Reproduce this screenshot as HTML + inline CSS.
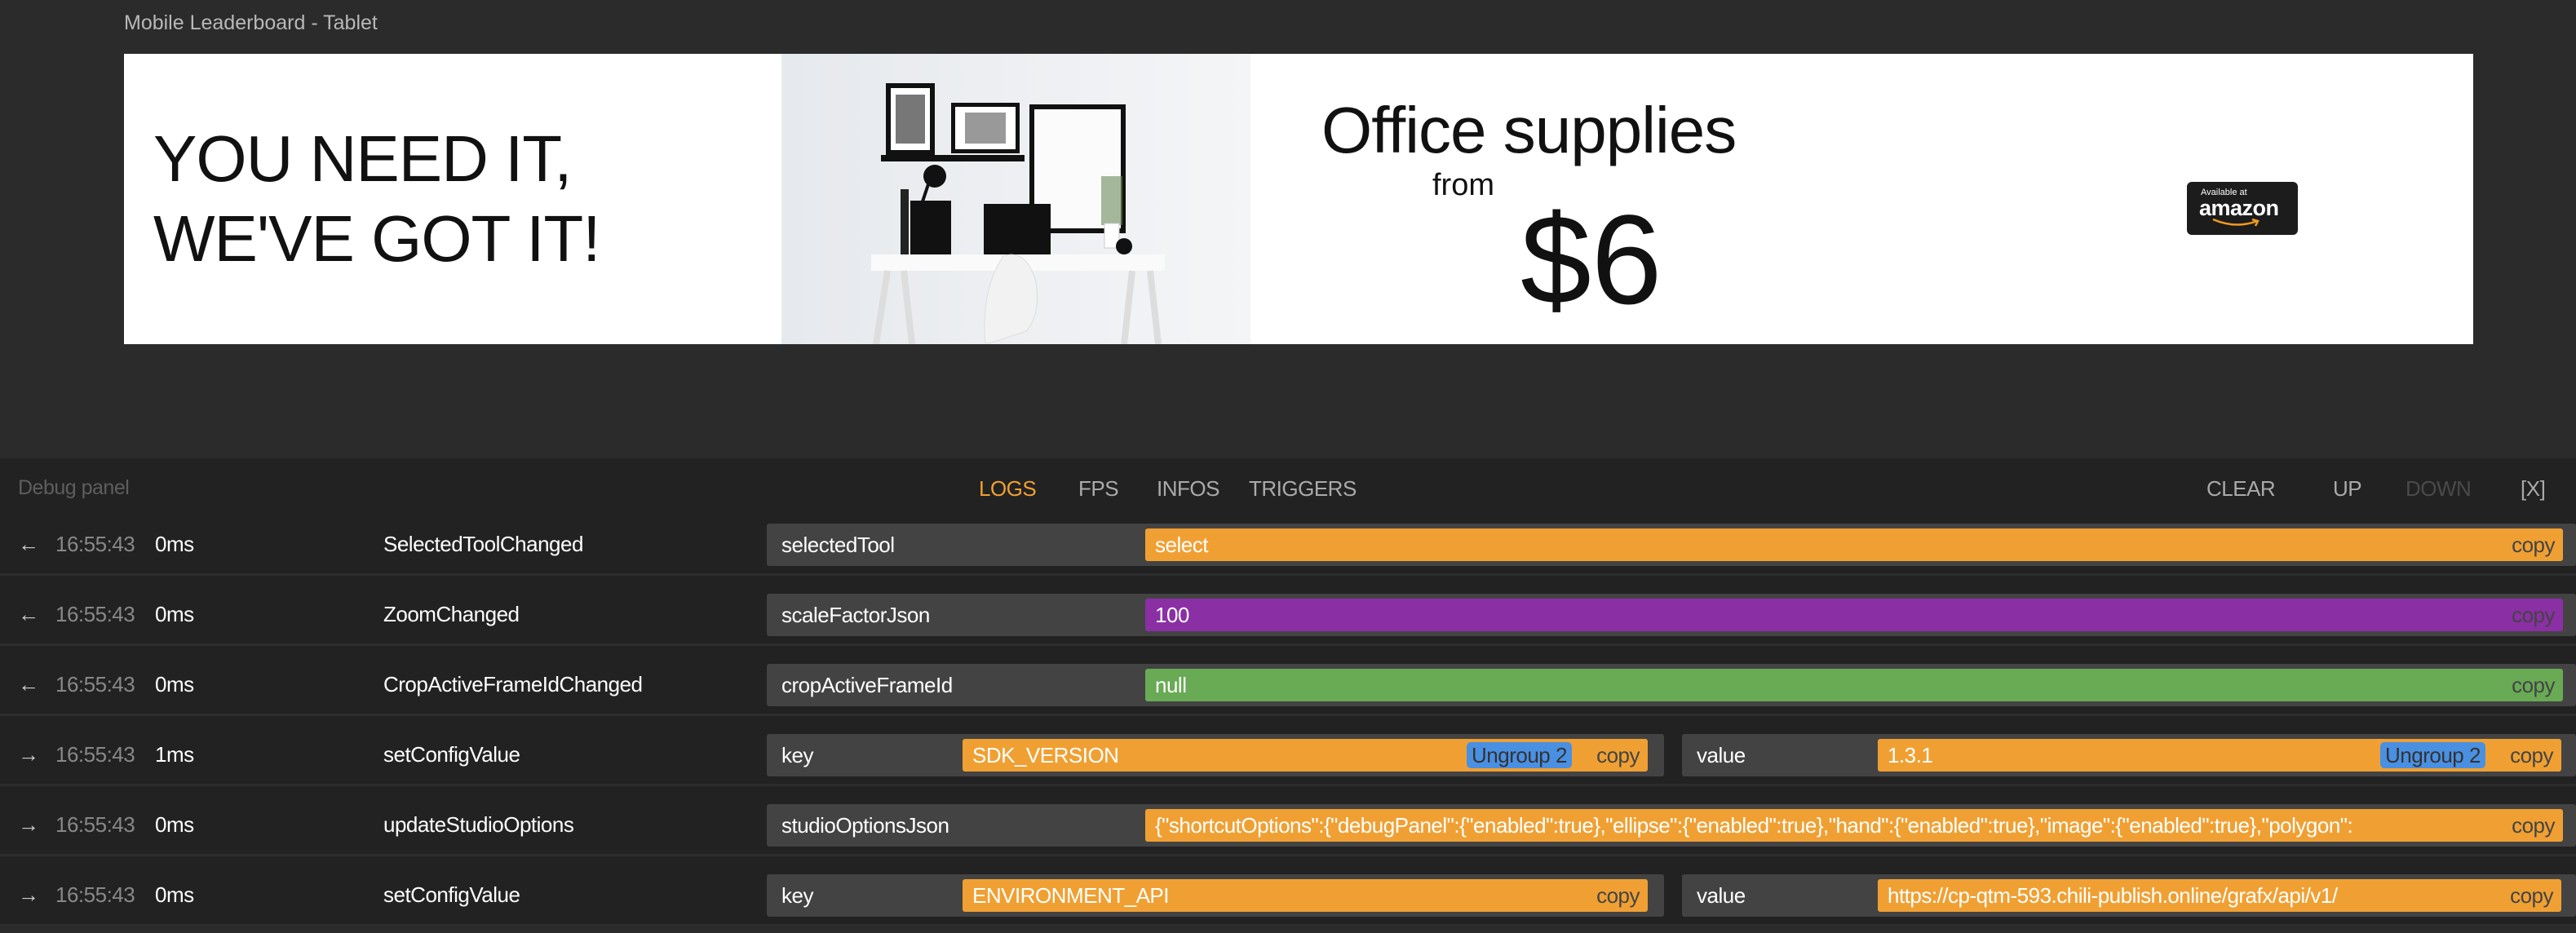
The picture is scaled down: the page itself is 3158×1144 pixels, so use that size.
<!DOCTYPE html>
<html><head><meta charset="utf-8"><style>
*{margin:0;padding:0;box-sizing:border-box}
body{width:3158px;height:1136px;background:#2b2b2b;font-family:"Liberation Sans",sans-serif;position:relative;overflow:hidden}
.a{position:absolute;white-space:nowrap}
.title{left:152px;top:14px;font-size:25px;color:#b8b8b8}
.banner{left:152px;top:66px;width:2880px;height:356px;background:#fff}
.dp{left:0;top:562px;width:3158px;height:574px;background:#222}
.hd{font-size:26px;top:584px;color:#aaa;letter-spacing:-0.5px}
.row{position:absolute;left:0;width:3158px;height:86px;border-bottom:3px solid #2d2d2d}
.t{position:absolute;font-size:26px;letter-spacing:-0.5px;top:0;line-height:94px;white-space:nowrap}
.box{position:absolute;top:22px;height:52px;background:#434343;border-radius:3px}
.box .t{line-height:52px!important}
.bar{position:absolute;top:6px;height:40px;border-radius:3px;color:#fff;font-size:26px;line-height:40px;padding-left:12px;letter-spacing:-0.5px;white-space:nowrap;overflow:hidden}
.cp{position:absolute;right:10px;top:0;color:#444}
.ug{position:absolute;top:4px;height:32px;line-height:32px;background:#4a90e2;color:#333;border-radius:5px;padding:0 6px;font-size:26px}
</style></head><body>
<div class="a title">Mobile Leaderboard - Tablet</div>
<div class="a banner">
 <div class="a" style="left:36px;top:80px;font-size:80px;line-height:98px;color:#111;letter-spacing:-1px">YOU NEED IT,<br>WE'VE GOT IT!</div>
 <svg class="a" style="left:806px;top:0" width="575" height="356" viewBox="0 0 575 356">
  <defs><linearGradient id="g" x1="0" x2="1"><stop offset="0" stop-color="#e6e9ed"/><stop offset="1" stop-color="#f4f5f7"/></linearGradient></defs>
  <rect width="575" height="356" fill="url(#g)"/>
  <rect x="128" y="36" width="60" height="88" fill="#111"/><rect x="134" y="42" width="48" height="76" fill="#fff"/><rect x="140" y="50" width="36" height="60" fill="#777"/>
  <rect x="208" y="60" width="84" height="62" fill="#111"/><rect x="213" y="65" width="74" height="52" fill="#fff"/><rect x="225" y="72" width="50" height="38" fill="#999"/>
  <rect x="304" y="62" width="118" height="158" fill="#111"/><rect x="310" y="68" width="106" height="146" fill="#fbfbfb"/>
  <rect x="122" y="124" width="176" height="8" fill="#111"/>
  <rect x="146" y="166" width="10" height="80" fill="#222"/>
  <rect x="158" y="180" width="50" height="68" fill="#111"/>
  <rect x="248" y="184" width="82" height="62" fill="#111"/>
  <rect x="110" y="246" width="360" height="20" fill="#fafafa"/>
  <path d="M130 266 L116 356 M150 266 L160 356 M430 266 L420 356 M452 266 L462 356" stroke="#ddd" stroke-width="8"/>
  <path d="M250 356 Q244 290 272 248 Q300 238 312 280 Q318 320 300 340 L270 350 Z" fill="#f2f2f2" stroke="#ddd"/>
  <path d="M180 160 L168 196 L176 240" stroke="#111" stroke-width="4" fill="none"/><circle cx="188" cy="150" r="14" fill="#111"/>
  <rect x="392" y="150" width="26" height="60" fill="#6a8a5a" opacity=".6"/><rect x="396" y="208" width="18" height="30" fill="#fff" stroke="#ccc"/>
  <circle cx="420" cy="236" r="10" fill="#111"/>
 </svg>
 <div class="a" style="left:1468px;top:48px;font-size:80px;color:#111;letter-spacing:-1px">Office supplies</div>
 <div class="a" style="left:1604px;top:140px;font-size:38px;color:#111">from</div>
 <div class="a" style="left:1712px;top:164px;font-size:156px;color:#111">$6</div>
 <div class="a" style="left:2529px;top:157px;width:136px;height:65px;background:#1c1c1c;border-radius:6px;color:#fff">
  <div class="a" style="left:17px;top:7px;font-size:11px">Available at</div>
  <div class="a" style="left:15px;top:17px;font-size:27px;font-weight:bold;letter-spacing:-0.5px">amazon</div>
  <svg class="a" style="left:30px;top:44px" width="60" height="12"><path d="M2 2 Q30 14 56 4 M50 2 L57 4 L54 10" stroke="#f29a1f" stroke-width="2.5" fill="none"/></svg>
 </div>
</div>
<div class="a dp"></div>
<div class="a hd" style="left:22px;color:#5e5e5e;font-size:25px">Debug panel</div>
<div class="a hd" style="left:1200px;color:#f0a030">LOGS</div>
<div class="a hd" style="left:1322px">FPS</div>
<div class="a hd" style="left:1418px">INFOS</div>
<div class="a hd" style="left:1531px">TRIGGERS</div>
<div class="a hd" style="left:2705px">CLEAR</div>
<div class="a hd" style="left:2860px">UP</div>
<div class="a hd" style="left:2949px;color:#4a4a4a">DOWN</div>
<div class="a hd" style="left:3090px">[X]</div>

<div class="row" style="top:620px">
 <div class="t" style="left:22px;color:#ccc">←</div><div class="t" style="left:68px;color:#888">16:55:43</div><div class="t" style="left:190px;color:#fff">0ms</div>
 <div class="t" style="left:470px;color:#fff">SelectedToolChanged</div>
 <div class="box" style="left:940px;width:2218px"><div class="t" style="left:18px;color:#fff">selectedTool</div>
  <div class="bar" style="left:464px;width:1738px;background:#f0a033">select<span class="cp">copy</span></div></div>
</div>
<div class="row" style="top:706px">
 <div class="t" style="left:22px;color:#ccc">←</div><div class="t" style="left:68px;color:#888">16:55:43</div><div class="t" style="left:190px;color:#fff">0ms</div>
 <div class="t" style="left:470px;color:#fff">ZoomChanged</div>
 <div class="box" style="left:940px;width:2218px"><div class="t" style="left:18px;color:#fff">scaleFactorJson</div>
  <div class="bar" style="left:464px;width:1738px;background:#8b2fa5">100<span class="cp">copy</span></div></div>
</div>
<div class="row" style="top:792px">
 <div class="t" style="left:22px;color:#ccc">←</div><div class="t" style="left:68px;color:#888">16:55:43</div><div class="t" style="left:190px;color:#fff">0ms</div>
 <div class="t" style="left:470px;color:#fff">CropActiveFrameIdChanged</div>
 <div class="box" style="left:940px;width:2218px"><div class="t" style="left:18px;color:#fff">cropActiveFrameId</div>
  <div class="bar" style="left:464px;width:1738px;background:#69aa55">null<span class="cp">copy</span></div></div>
</div>
<div class="row" style="top:878px">
 <div class="t" style="left:22px;color:#ccc">→</div><div class="t" style="left:68px;color:#888">16:55:43</div><div class="t" style="left:190px;color:#fff">1ms</div>
 <div class="t" style="left:470px;color:#fff">setConfigValue</div>
 <div class="box" style="left:940px;width:1100px"><div class="t" style="left:18px;color:#fff">key</div>
  <div class="bar" style="left:240px;width:840px;background:#f0a033">SDK_VERSION<span class="ug" style="left:618px">Ungroup 2</span><span class="cp">copy</span></div></div>
 <div class="box" style="left:2062px;width:1096px"><div class="t" style="left:18px;color:#fff">value</div>
  <div class="bar" style="left:240px;width:838px;background:#f0a033">1.3.1<span class="ug" style="left:616px">Ungroup 2</span><span class="cp">copy</span></div></div>
</div>
<div class="row" style="top:964px">
 <div class="t" style="left:22px;color:#ccc">→</div><div class="t" style="left:68px;color:#888">16:55:43</div><div class="t" style="left:190px;color:#fff">0ms</div>
 <div class="t" style="left:470px;color:#fff">updateStudioOptions</div>
 <div class="box" style="left:940px;width:2218px"><div class="t" style="left:18px;color:#fff">studioOptionsJson</div>
  <div class="bar" style="left:464px;width:1738px;background:#f0a033">{"shortcutOptions":{"debugPanel":{"enabled":true},"ellipse":{"enabled":true},"hand":{"enabled":true},"image":{"enabled":true},"polygon":<span class="cp" style="background:#f0a033;padding-left:20px">copy</span></div></div>
</div>
<div class="row" style="top:1050px">
 <div class="t" style="left:22px;color:#ccc">→</div><div class="t" style="left:68px;color:#888">16:55:43</div><div class="t" style="left:190px;color:#fff">0ms</div>
 <div class="t" style="left:470px;color:#fff">setConfigValue</div>
 <div class="box" style="left:940px;width:1100px"><div class="t" style="left:18px;color:#fff">key</div>
  <div class="bar" style="left:240px;width:840px;background:#f0a033">ENVIRONMENT_API<span class="cp">copy</span></div></div>
 <div class="box" style="left:2062px;width:1096px"><div class="t" style="left:18px;color:#fff">value</div>
  <div class="bar" style="left:240px;width:838px;background:#f0a033">https://cp-qtm-593.chili-publish.online/grafx/api/v1/<span class="cp">copy</span></div></div>
</div>
</body></html>
